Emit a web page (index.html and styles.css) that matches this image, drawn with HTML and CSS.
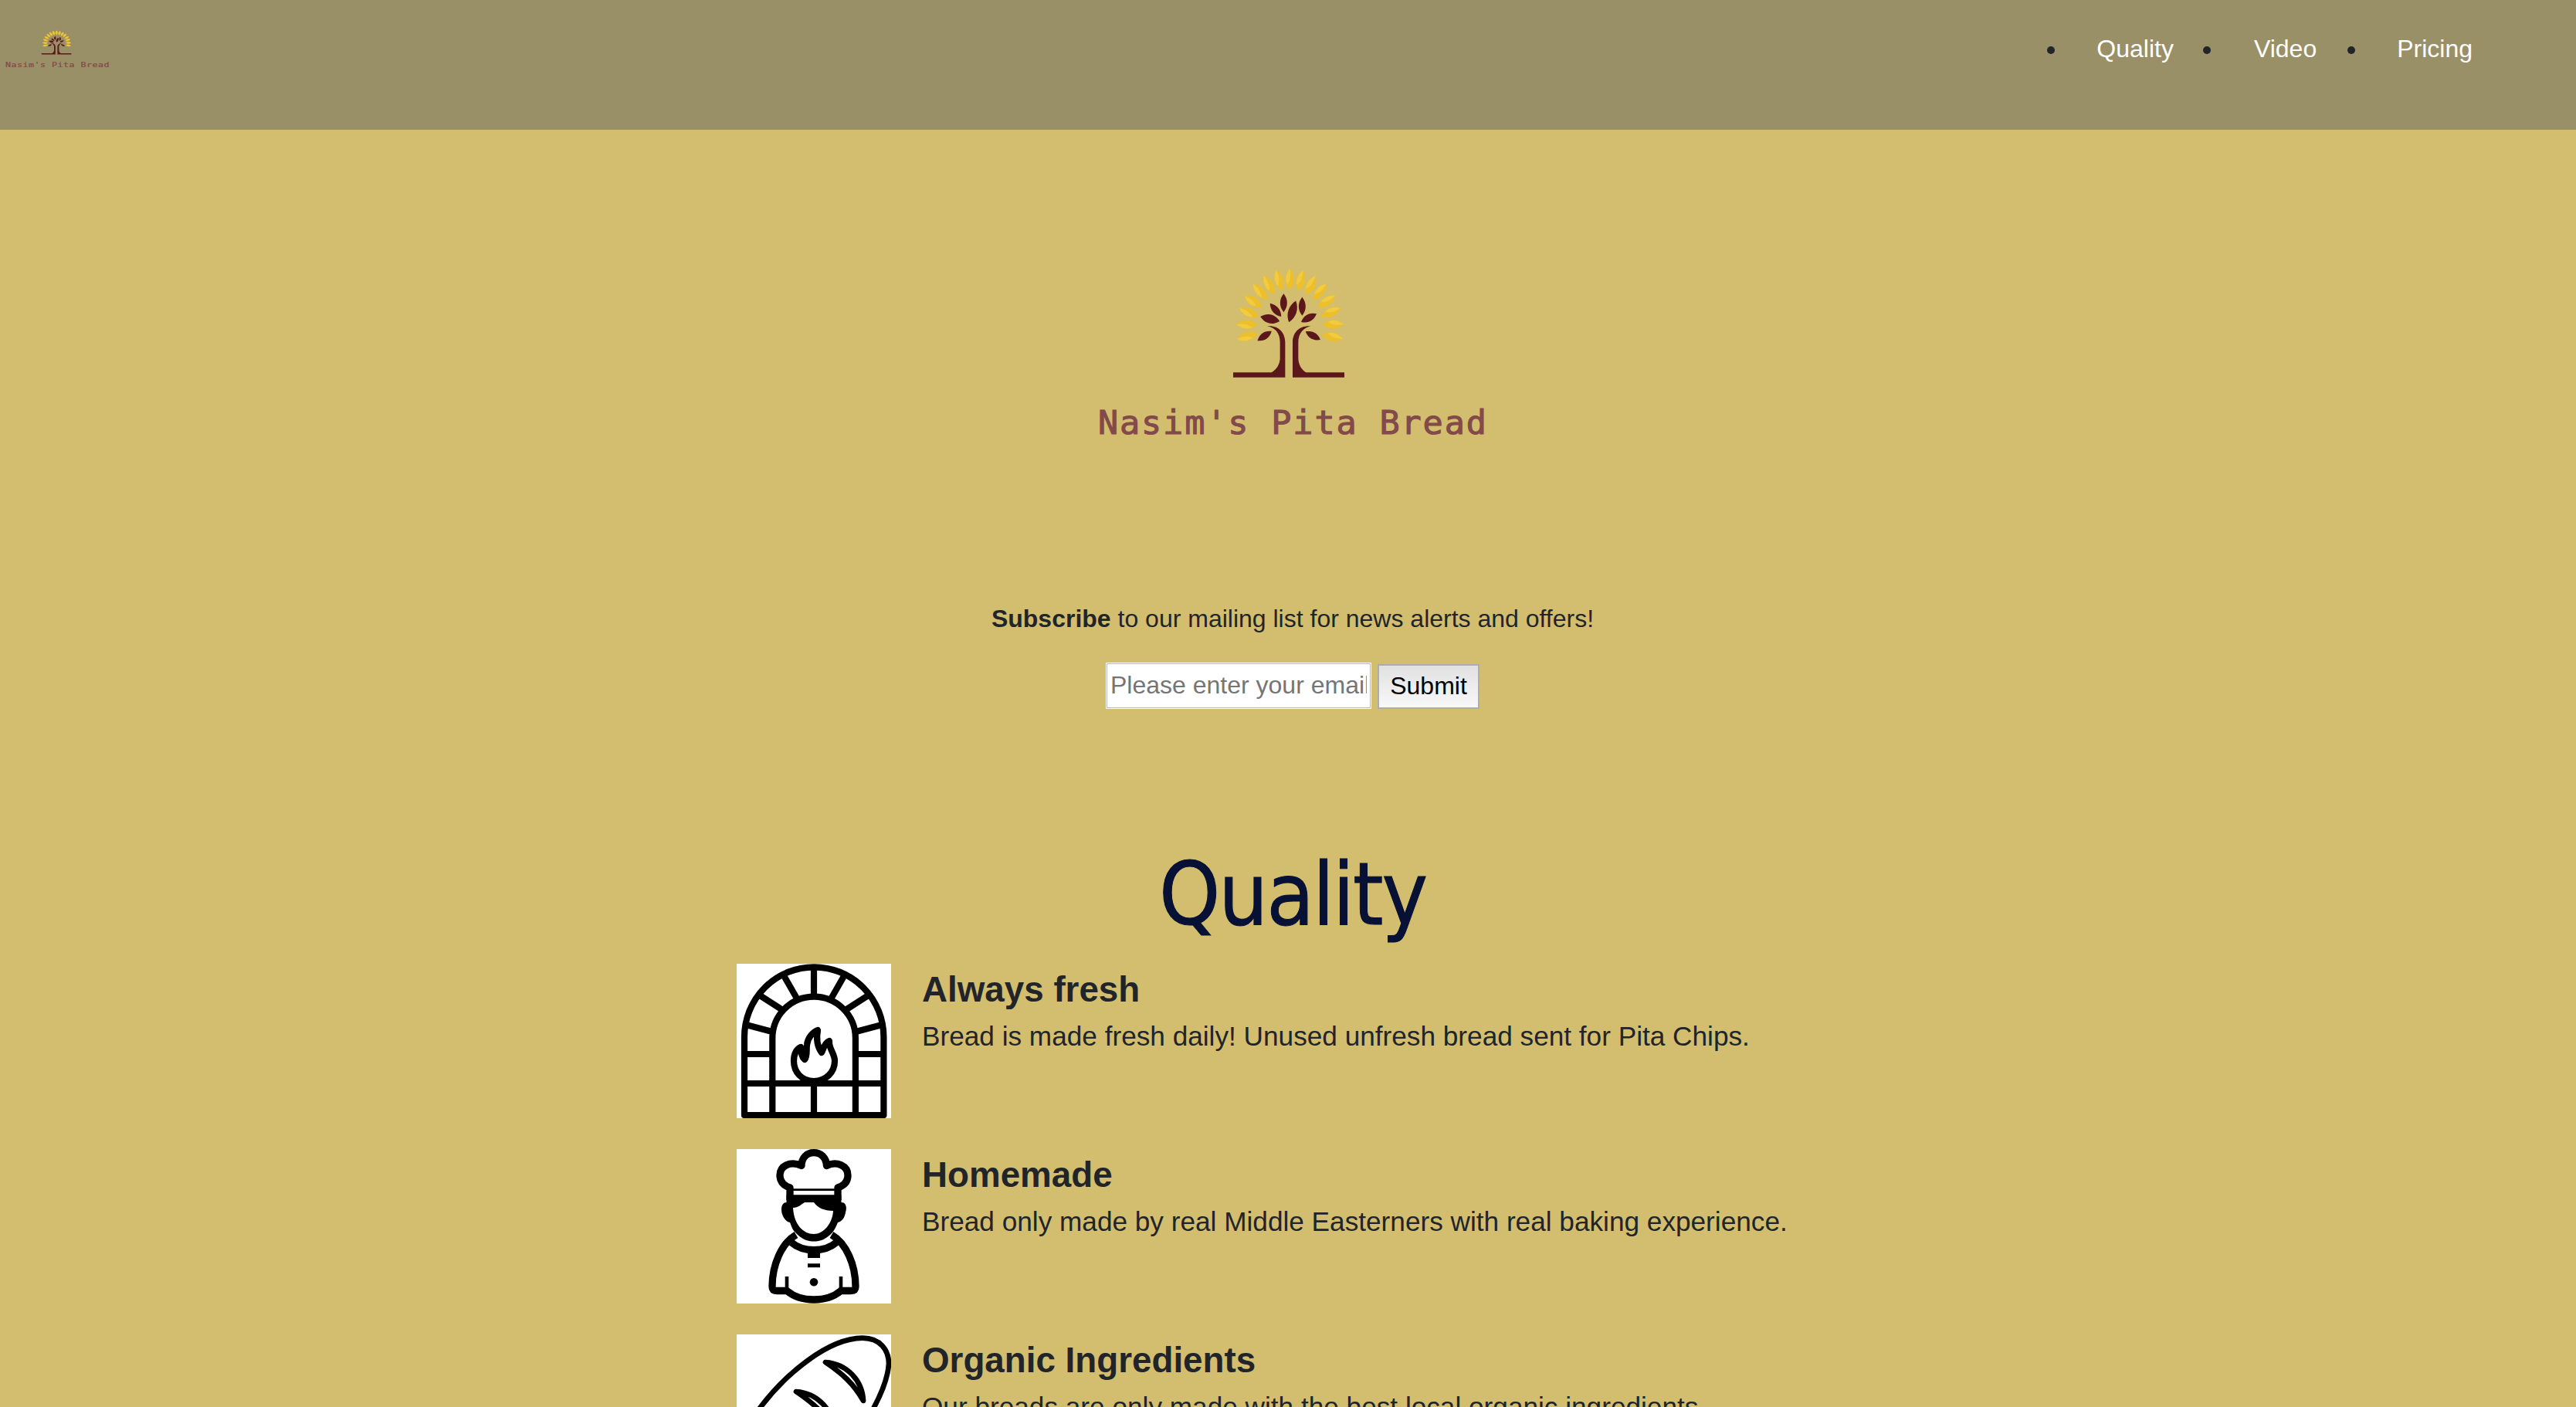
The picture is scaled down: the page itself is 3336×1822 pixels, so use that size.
FILE: index.html
```html
<!DOCTYPE html>
<html lang="en">
<head>
<meta charset="utf-8">
<title>Nasim's Pita Bread</title>
<link rel="stylesheet" href="styles.css">
</head>
<body>
<svg class="defs" aria-hidden="true">
  <defs>
    <g id="sun-leaf">
      <path fill="#ecbf2b" d="M0-41C23-15 23 15 0 41C-23 15-23-15 0-41Z"/>
      <path fill="#f1cb40" d="M0-41C6-15 2 5-10 20C-20 0-15-22 0-41Z"/>
    </g>
    <path id="leaf" d="M0-40C20-15 20 15 0 40C-20 15-20-15 0-40Z"/>
    <g id="logo">
      <g transform="translate(160 30) scale(.33333)">
        <use href="#sun-leaf" transform="translate(331 95)"/>
        <use href="#sun-leaf" transform="translate(289 99) rotate(-15)"/>
        <use href="#sun-leaf" transform="translate(250 117) rotate(-30)"/>
        <use href="#sun-leaf" transform="translate(216 144) rotate(-42)"/>
        <use href="#sun-leaf" transform="translate(189 181) rotate(-57)"/>
        <use href="#sun-leaf" transform="translate(172 224) rotate(-66)"/>
        <use href="#sun-leaf" transform="translate(164 271) rotate(-90)"/>
        <use href="#sun-leaf" transform="translate(166 317) rotate(-104)"/>
        <use href="#sun-leaf" transform="translate(373 100) rotate(13)"/>
        <use href="#sun-leaf" transform="translate(412 118) rotate(27)"/>
        <use href="#sun-leaf" transform="translate(447 144) rotate(40)"/>
        <use href="#sun-leaf" transform="translate(474 181) rotate(56)"/>
        <use href="#sun-leaf" transform="translate(491 223) rotate(66)"/>
        <use href="#sun-leaf" transform="translate(499 270) rotate(90)"/>
        <use href="#sun-leaf" transform="translate(496 318) rotate(102)"/>
        <g fill="#5c171a">
          <use href="#leaf" transform="translate(307 187) scale(.9)"/>
          <use href="#leaf" transform="translate(276 214) rotate(-40) scale(.85)"/>
          <use href="#leaf" transform="translate(254 249) rotate(-77) scale(1.15 .96)"/>
          <use href="#leaf" transform="translate(341 220) rotate(18) scale(1.08 1.1)"/>
          <use href="#leaf" transform="translate(379 200) scale(.9)"/>
          <use href="#leaf" transform="translate(405 245) rotate(62) scale(.95 .85)"/>
          <use href="#leaf" transform="translate(233 315) rotate(56) scale(.9 .83)"/>
          <use href="#leaf" transform="translate(421 314) rotate(-61) scale(.9 .82)"/>
          <path d="M111 457H260C280 445 293 425 293 400V340C293 305 275 283 243 277C285 272 313 300 313 340V476H111Z"/>
          <path d="M543 457H394C375 445 364 425 364 400V340C364 305 385 283 412 277C370 274 342 300 342 340V476H543Z"/>
        </g>
      </g>
      <text class="logo-text" x="22" y="262">Nasim's Pita Bread</text>
    </g>
  </defs>
</svg>

<header class="header">
  <svg class="header-logo" viewBox="0 0 560 300" preserveAspectRatio="none"><use href="#logo"/></svg>
  <nav>
    <ul class="nav-list">
      <li><a href="#quality">Quality</a></li>
      <li class="nav-video"><a href="#video">Video</a></li>
      <li><a href="#pricing">Pricing</a></li>
    </ul>
  </nav>
</header>

<main class="main">
  <svg class="hero-logo" viewBox="0 0 560 300"><use href="#logo"/></svg>
  <p class="subscribe"><b>Subscribe</b> to our mailing list for news alerts and offers!</p>
  <form class="form">
    <input class="email" type="email" placeholder="Please enter your email">
    <button class="submit" type="button">Submit</button>
  </form>

  <h1 class="section-title" id="quality">Quality</h1>
  <div class="features">
    <article class="feature">
      <svg class="feature-icon" viewBox="0 0 200 200" fill="none" stroke="#000" stroke-width="8.2">
        <path stroke-linejoin="round" d="M10 95A90.2 90.7 0 0 1 190.4 95V196H10Z"/>
        <path d="M46.3 196V96.4A53.8 53.8 0 0 1 153.9 96.4V196M10 117H46M154 117H190M10 155H190M100 155V196M100 4V43M62 17L78 45M30 41L58 59M12 79L46 88M138.400 17L122.400 45M170.400 41L142.400 59M188.400 79L154.400 88"/>
        <path stroke-linejoin="round" d="M100 152C84 152 74 140 74 126C74 118 77 111 83 108C84 116 84 121 88 124C92 120 90 112 91 105C92 96 98 89 105 86C103 97 104 107 110 115C113 110 113 103 120 100C119 110 127 116 127 126C127 140 116 152 100 152Z"/>
      </svg>
      <div>
        <h2>Always fresh</h2>
        <p>Bread is made fresh daily! Unused unfresh bread sent for Pita Chips.</p>
      </div>
    </article>
    <article class="feature">
      <svg class="feature-icon" viewBox="0 0 200 200" fill="none" stroke="#000" stroke-width="9.3">
        <path d="M69 66V50C60 47 56 41 56 34C56 22 69 15 84 21.500C84 11 91 4.700 100 4.700C109 4.700 116 11 116.500 21.500C130 15 144 22 144 34C144 41 140 47 131 50V66" stroke-linejoin="round"/>
        <path d="M69 52.700H131" stroke-width="2.700"/>
        <path stroke="none" fill="#000" d="M64.500 59.300H135.500V69C142 69 143 76 141 82C140 89 136 94 131 95C129 100 127 104 124 108C116 117 108 119.500 100 119.500C92 119.500 84 117 76 108C72 104 71 100 69 95C63 94 58 86 58 78C58 72 61 69 64.500 69Z"/>
        <path stroke="none" fill="#fff" d="M73 76C80 76 83 72 88 69H100C105 76 113 80 125 80C124 97 112 110 100 110C86 110 74 97 73 76Z"/>
        <path d="M77 111C58 122 46 150 46 178C46 182 48 183.500 52 183.500H65C75 192 88 195 100 195C112 195 125 192 135 183.500H148C152 183.500 154 182 154 178C154 150 142 122 123 111"/>
        <path d="M71 121C86 134 114 134 129 121"/>
        <path d="M65 165V184M135 165V184" stroke-width="4.600"/>
        <path stroke="none" fill="#000" d="M92 134H108V141H92ZM92 148.300H108V153.300H92Z"/>
        <circle cx="100" cy="172.300" r="5.300" stroke="none" fill="#000"/>
      </svg>
      <div>
        <h2>Homemade</h2>
        <p>Bread only made by real Middle Easterners with real baking experience.</p>
      </div>
    </article>
    <article class="feature">
      <svg class="feature-icon" viewBox="0 0 200 200" fill="none" stroke="#000" stroke-width="6.700" stroke-linejoin="round" stroke-linecap="round">
        <path d="M28 98C62 52 118 5 163 4.700C186 5 197 20 197 38C196 55 188 76 176 98C140 160 80 196 37 195C14 195 3 180 3 162C4 145 12 122 28 98Z"/>
        <path d="M115 36C143 38 163 60 164 86C152 64 136 50 115 36Z"/>
        <path d="M77 74C105 76 125 98 126 124C114 102 98 88 77 74Z"/>
      </svg>
      <div>
        <h2>Organic Ingredients</h2>
        <p>Our breads are only made with the best local organic ingredients.</p>
      </div>
    </article>
  </div>
</main>
</body>
</html>
```
FILE: styles.css
```css
* { box-sizing: border-box; }
html { overflow: hidden; }
body {
  margin: 0;
  height: 1822px;
  overflow: hidden;
  background: #d3be6f;
  color: #212529;
  font: 32px/48px "Liberation Sans", Arial, sans-serif;
}
h1, h2, p, ul { margin: 0; padding: 0; }
.defs { display: block; width: 0; height: 0; }
.logo-text {
  font: 43.5px "DejaVu Sans Mono", monospace;
  letter-spacing: 1.85px;
  fill: #824a4a;
  stroke: #824a4a;
  stroke-width: 1.1px;
}
.header {
  display: flex;
  justify-content: space-between;
  align-items: flex-start;
  height: 168px;
  padding: 29px 134px 0 1px;
  background: #9a9067;
}
.header-logo { width: 150px; height: 66px; }
.nav-list {
  display: flex;
  gap: 38px;
  padding-top: 10px;
  list-style: none;
}
.nav-list li { display: flex; align-items: center; gap: 54px; }
.nav-list li::before {
  content: "";
  width: 10px;
  height: 10px;
  margin-top: 4px;
  border-radius: 50%;
  background: #212529;
}
.nav-list .nav-video { gap: 56px; margin-right: 2px; }
.nav-list a { color: #fff; text-decoration: none; }
.main {
  display: flex;
  flex-direction: column;
  align-items: center;
  padding: 132px 0 0 12px;
}
.hero-logo { width: 560px; height: 300px; margin-left: 12px; }
.subscribe { margin-top: 177px; }
.form { display: flex; align-items: flex-end; gap: 8px; margin-top: 33px; }
.email {
  width: 344px;
  height: 60px;
  padding: 0 5px 2px;
  border: 1px solid #fff;
  outline: 1px solid #b9b9bd;
  outline-offset: -2px;
  border-radius: 0;
  background: #fff;
  font: inherit;
}
.email::placeholder { color: #757575; opacity: 1; }
.submit {
  width: 132px;
  height: 58px;
  padding: 0 0 3px;
  border: 2px solid #adadb0;
  border-radius: 0;
  background: linear-gradient(#e1e1e1, #f8f8f8);
  color: #000;
  font: inherit;
}
.section-title {
  margin-top: 174px;
  color: #071035;
  font: 112px/132px "DejaVu Sans Condensed", "DejaVu Sans", sans-serif;
  font-stretch: condensed;
  letter-spacing: -2px;
  -webkit-text-stroke: 1px #071035;
}
.features {
  display: flex;
  flex-direction: column;
  gap: 40px;
  width: 1440px;
  margin-top: 24px;
}
.feature { display: flex; gap: 40px; height: 200px; }
.feature-icon { flex: none; width: 200px; height: 200px; background: #fff; }
.feature h2 { margin-top: 6px; font-size: 45.76px; line-height: 56px; }
.feature p { margin-top: 6px; font-size: 35.2px; line-height: 52px; white-space: nowrap; }
```
